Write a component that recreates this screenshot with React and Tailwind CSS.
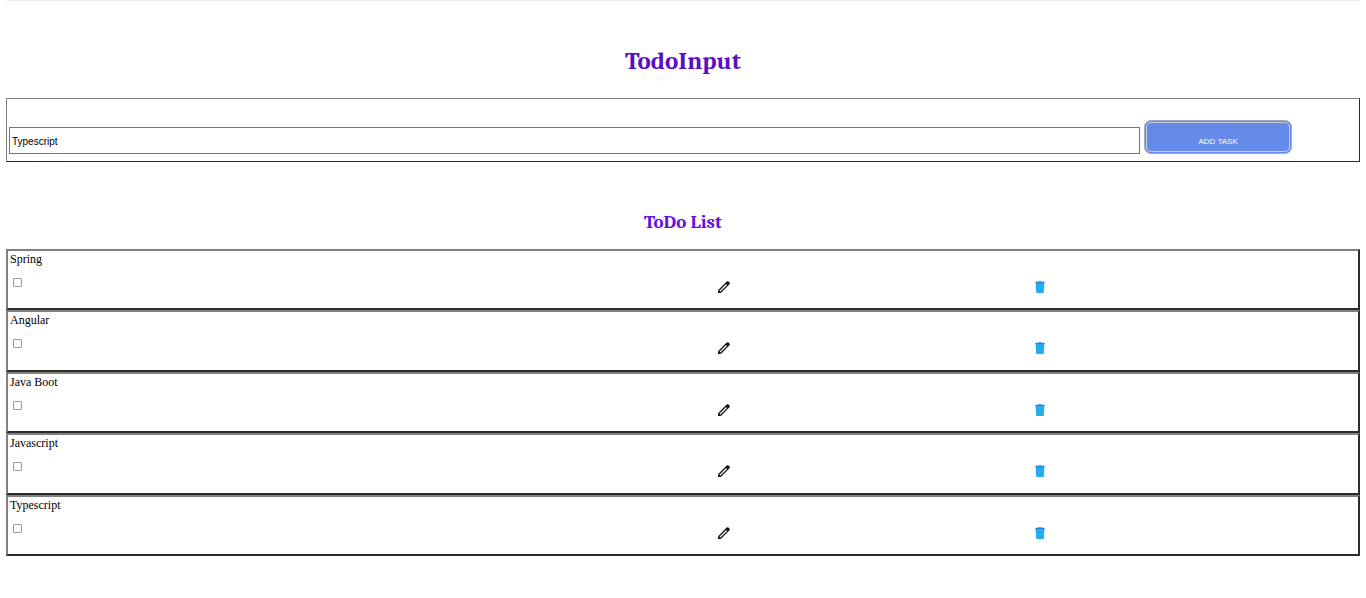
import { useState } from "react";

const initialTodos = ["Spring", "Angular", "Java Boot", "Javascript", "Typescript"];

function PencilIcon() {
  return (
    <svg viewBox="0 0 14 14" className="block h-3.5 w-3.5" aria-hidden="true">
      <path
        d="M1.6 12.4 L2 10.2 L9.9 2.3 Q10.7 1.6 11.4 2.3 L11.8 2.7 Q12.5 3.4 11.8 4.1 L3.9 12 Z"
        fill="#fff"
        stroke="#111"
        strokeWidth="1.3"
        strokeLinejoin="round"
      />
      <path
        d="M8.5 3.6 L10 2 Q10.7 1.4 11.4 2 L12.1 2.7 Q12.7 3.4 12.1 4 L10.5 5.6 Z M1.2 12.9 L1.6 10.2 L3.9 12.5 Z"
        fill="#111"
      />
    </svg>
  );
}

function TrashIcon() {
  return (
    <svg viewBox="0 0 12 14" className="block h-3.5 w-3" aria-hidden="true">
      <defs>
        <linearGradient id="bin" x1="0" y1="0" x2="1" y2="1">
          <stop offset="0" stopColor="#2aa4f0" />
          <stop offset="1" stopColor="#1fb4ee" />
        </linearGradient>
      </defs>
      <path d="M1.6 2.8 H10.4 L9.9 12.2 Q9.8 13 9 13 H3 Q2.2 13 2.1 12.2 Z" fill="url(#bin)" />
      <path d="M3.8 1.7 Q3.9 1.2 4.5 1.2 H7.5 Q8.1 1.2 8.2 1.7 H9.8 Q10.9 1.9 11 3 H1 Q1.1 1.9 2.2 1.7 Z" fill="#2488da" />
    </svg>
  );
}

function TodoItem({ name }) {
  return (
    <li className="border-2 border-t-[#808080] border-r-[#2c2c2c] border-b-[#2c2c2c] border-l-[#808080] px-0.5">
      <label htmlFor={name} className="block text-xs leading-4">
        {name}
      </label>
      <div className="grid grid-cols-[52.5%_23.5%_1fr] items-start pt-[11px]">
        <input
          id={name}
          type="checkbox"
          className="ml-[3px] h-[9px] w-[9px] appearance-none rounded-[1px] border border-[#999] bg-white checked:bg-[#0075ff]"
        />
        <button type="button" aria-label={"Edit " + name} className="mt-0.5 w-3.5">
          <PencilIcon />
        </button>
        <button type="button" aria-label={"Delete " + name} className="mt-0.5 w-3.5 pl-px">
          <TrashIcon />
        </button>
      </div>
    </li>
  );
}

export default function App() {
  const [todos, setTodos] = useState(initialTodos);
  const [task, setTask] = useState("Typescript");

  const addTask = (event) => {
    event.preventDefault();
    if (task && !todos.includes(task)) setTodos([...todos, task]);
  };

  return (
    <main className="bg-white px-1.5 pb-10 font-['Liberation_Serif',serif] text-black">
      <hr className="border-t border-[#ededed]" />
      <h1 className="pt-11 text-center font-['Cambria','Caladea','Liberation_Serif',serif] text-[25px] leading-8 font-bold text-[#5b0fc4]">
        TodoInput
      </h1>
      <form
        onSubmit={addTask}
        className="mt-[21px] flex items-end gap-1 border border-t-[#808080] border-r-[#2c2c2c] border-b-[#2c2c2c] border-l-[#808080] px-0.5 pt-[21px] pb-[7px]"
      >
        <input
          aria-label="Task"
          value={task}
          onChange={(e) => setTask(e.target.value)}
          className="h-[27px] w-[83.9%] border border-[#767676] px-0.5 pt-0.5 font-['Liberation_Sans',sans-serif] text-[10px] outline-none"
        />
        <button
          type="submit"
          className="h-[34px] w-[11%] rounded-[7px] border border-[#a3acc5] bg-[#668ae8] p-px font-['Liberation_Sans',sans-serif] text-[8px] text-white"
        >
          <span className="flex h-full items-center justify-center rounded-[5px] border border-[#cbd0df] pt-2.5">
            ADD TASK
          </span>
        </button>
      </form>
      <h2 className="mt-[46px] text-center font-['Cambria','Caladea','Liberation_Serif',serif] text-[19px] leading-7 font-bold text-[#6610e0]">
        ToDo List
      </h2>
      <ul className="mt-[13px] grid min-h-[307px] auto-rows-fr">
        {todos.map((name) => (
          <TodoItem key={name} name={name} />
        ))}
      </ul>
    </main>
  );
}
